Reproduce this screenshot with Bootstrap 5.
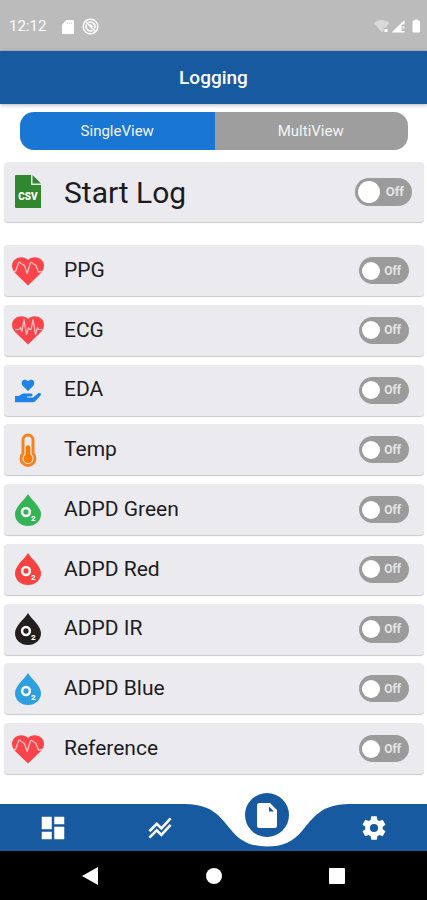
<!DOCTYPE html>
<html lang="en">
<head>
<meta charset="utf-8">
<meta name="viewport" content="width=device-width, initial-scale=1">
<title>Logging</title>
<link href="https://cdn.jsdelivr.net/npm/bootstrap@5.3.0/dist/css/bootstrap.min.css" rel="stylesheet">
<style>
  body { font-family: Roboto, "Liberation Sans", sans-serif; color: #1c1c1e; }
  .status-bar { background: #bbb; height: 51px; font-size: 15px; padding: 2px 7px 0 9px; }
  .title-bar { background: #175a9f; height: 53px; padding-top: 2px; box-shadow: 0 1px 4px rgba(0,0,0,.3); }
  .title-bar h1 { font-size: 19px; font-weight: 500; }
  .view-tabs { height: 38px; margin: 0 16px; }
  .view-tabs .btn { --bs-btn-border-radius: 14px; border: 0; flex: 1 1 0; font-size: 15px; line-height: 20px; color: #f4f4f4; background: #9e9e9e; }
  .view-tabs .btn.active { color: #f4f4f4; background: #1976d2; }
  .log-page { padding: 8px 3px 30px 4px; }
  .log-row { height: 51px; padding: 0 15px 0 8px; background: #ebeaef; border-radius: 4px; box-shadow: 0 1px 1px rgba(0,0,0,.22); font-size: 21px; }
  .log-row svg { width: 32px; height: 36px; margin-right: 20px; flex: none; }
  .log-row.start { height: 60px; padding-right: 12px; margin: 12px 0 23px; font-size: 30px; }
  .pill { width: 50px; height: 27px; padding: 0 8px 0 3px; border-radius: 14px; background: #9b9b9b; color: #e4e4e4; font-size: 12px; font-weight: 700; cursor: pointer; }
  .pill input { appearance: none; width: 18px; height: 18px; margin: 0; border-radius: 50%; background: #fff; cursor: pointer; }
  .start .pill { width: 57px; height: 28px; font-size: 13px; }
  .start .pill input { width: 22px; height: 22px; }
  .pill:has(input:checked) { background: #1976d2; flex-direction: row-reverse; }
  .tab-bar { height: 47px; background: #175a9f; }
  .tab-bar a { flex: 1 1 0; }
  .notch { position: absolute; top: 0; left: 50%; transform: translateX(-50%); }
  .fab { position: absolute; top: -11px; left: 50%; transform: translateX(-50%); width: 44px; height: 44px; background: #175a9f; }
  .system-bar { height: 49px; background: #000; padding: 0 74px; }
  .system-bar button { background: none; border: 0; padding: 0; width: 32px; height: 32px; }
</style>
<script src="https://cdn.jsdelivr.net/npm/bootstrap@5.3.0/dist/js/bootstrap.bundle.min.js"></script>
</head>
<body class="d-flex flex-column min-vh-100 bg-white">

<svg class="d-none" aria-hidden="true">
  <symbol id="heart" viewBox="0 0 32 36">
    <path fill="#f8444a" d="M16 32.500 3 20C-1 15.500-1 9.500 3 6.500 7 3 13 3.800 16 7c3-3.200 9-4 13-.5 4 3 4 9 0 13.500z"/>
  </symbol>
  <symbol id="heart-ppg" viewBox="0 0 32 36">
    <use href="#heart" width="32" height="36"/>
    <path fill="none" stroke="#ffc0c3" stroke-width="1.300" stroke-linejoin="round" d="M1 18.500 3.500 18.500 6.500 10c.4-1.200 1.500-1.200 2.200 0 .8 1.300 1.500 1.500 2.200 1.500 1 0 1.600 1 2 2.500l2.300 6.500 3-10c.5-1.500 1.600-1.500 2.300-.5.800 1.300 1.500 1.500 2.200 1.500 1 .2 1.500 1.200 2 3l1.800 4.500 3.500-.5"/>
  </symbol>
  <symbol id="drop" viewBox="0 0 32 36">
    <path fill="currentColor" d="M16 2c4 6.500 13 13 13 20.200C29 29 23.200 34 16 34S3 29 3 22.200C3 15 12 8.500 16 2z"/>
    <circle cx="14" cy="20" r="3.900" fill="none" stroke="#fff" stroke-width="2.500"/>
    <text x="19" y="29" font-size="8" font-weight="900" fill="#fff">2</text>
  </symbol>
</svg>

<header>
  <div class="status-bar d-flex align-items-center text-white">
    <span>12:12</span>
    <svg class="flex-shrink-0 ms-3 me-2" width="12" height="14" viewBox="0 0 12 14" aria-label="SD card"><path fill="#fff" d="M4.500 0H11a1 1 0 0 1 1 1v12a1 1 0 0 1-1 1H1a1 1 0 0 1-1-1V4.500z"/><path stroke="#ccc" stroke-width=".6" d="M5.500 2v2M7.500 2v2M9.500 2v2"/></svg>
    <svg width="17" height="17" viewBox="0 0 17 17" fill="none" stroke="#fff" aria-label="Sync off"><circle cx="8.500" cy="8.500" r="7.300" stroke-width="1.400"/><path stroke-width="1.500" d="m4 4 9.500 9.500M6.500 4.500a4.500 4.500 0 0 1 6 6M4.500 6.500a4.500 4.500 0 0 0 6 6M8 6.500l2.500 2.500"/></svg>
    <svg class="ms-auto" width="46" height="15" viewBox="0 0 46 15" aria-label="Wi-Fi, signal, battery">
      <path fill="#d9d9d9" d="M0 4c4.500-4 11-4 15.500 0L12 8.500H9.500V12L8 13.500z"/><path fill="#fff" d="M10.500 10h3v3h-3z"/>
      <path fill="#fff" d="M30.500 1v4.500h-3V12h3v1.500H17.500z"/><path fill="#e8e8e8" d="M28.500 7h2v3h-2z"/>
      <path fill="#fff" d="M39.500 1.500h1.200V.5h3v1h1.300a1 1 0 0 1 1 1v10a1 1 0 0 1-1 1h-5.500a1 1 0 0 1-1-1v-10a1 1 0 0 1 1-1z"/>
    </svg>
  </div>
  <div class="title-bar d-flex align-items-center justify-content-center text-white">
    <h1 class="m-0">Logging</h1>
  </div>
</header>

<main class="log-page flex-grow-1 d-flex flex-column">
  <div class="view-tabs btn-group d-flex" role="group" aria-label="View">
    <button type="button" class="btn active" aria-pressed="true">SingleView</button>
    <button type="button" class="btn" aria-pressed="false">MultiView</button>
  </div>

  <div class="log-row start d-flex align-items-center">
    <svg viewBox="0 0 32 36" aria-hidden="true"><path fill="#30872f" d="M4 1h15v10h10v23H4a1 1 0 0 1-1-1V2a1 1 0 0 1 1-1z"/><path fill="#30872f" d="M20.500 1 29 9.500h-8.500z"/><text x="16" y="26" text-anchor="middle" font-size="10" font-weight="900" fill="#fff">CSV</text></svg>
    <label for="s0" class="flex-grow-1">Start Log</label>
    <label class="pill d-flex align-items-center justify-content-between"><input type="checkbox" id="s0"><span>Off</span></label>
  </div>

  <div class="flex-grow-1 d-flex flex-column justify-content-between">
    <div class="log-row d-flex align-items-center">
      <svg aria-hidden="true"><use href="#heart-ppg"/></svg>
      <label for="s1" class="flex-grow-1">PPG</label>
      <label class="pill d-flex align-items-center justify-content-between"><input type="checkbox" id="s1"><span>Off</span></label>
    </div>
    <div class="log-row d-flex align-items-center">
      <svg viewBox="0 0 32 36" aria-hidden="true"><use href="#heart" width="32" height="36"/><path fill="none" stroke="#ffc6c9" stroke-width="1.200" stroke-linejoin="round" d="M3 17.500h4l1.500-2 1.500 4 2-12 2.500 15 2-7 1 2h1.500l2-10 2.500 15 2-7 1 2h3.500"/></svg>
      <label for="s2" class="flex-grow-1">ECG</label>
      <label class="pill d-flex align-items-center justify-content-between"><input type="checkbox" id="s2"><span>Off</span></label>
    </div>
    <div class="log-row d-flex align-items-center">
      <svg viewBox="0 0 32 36" fill="#1e82e6" aria-hidden="true"><path d="m16 19-5-5c-2-2-1.500-5 .5-6 1.700-.8 3.300-.2 4.500 1.200C17.200 7.800 18.800 7.200 20.500 8c2 1 2.500 4 .5 6z"/><path d="M3 24h4c2-2 4-2.500 6-2.500h6c2 0 2 3 0 3h-4v1h6l5-4c2-1.200 4 .2 2.500 2L23 29.500c-.8.500-1.500.7-2.500.7H3z"/></svg>
      <label for="s3" class="flex-grow-1">EDA</label>
      <label class="pill d-flex align-items-center justify-content-between"><input type="checkbox" id="s3"><span>Off</span></label>
    </div>
    <div class="log-row d-flex align-items-center">
      <svg viewBox="0 0 32 36" aria-hidden="true"><path fill="none" stroke="#f58220" stroke-width="3" d="M11 8a5 5 0 0 1 10 0v13.500a7 7 0 1 1-10 0z"/><path fill="#f57c00" d="M13.700 15.500a2.300 2.300 0 0 1 4.600 0v7.200a4.500 4.500 0 1 1-4.600 0z"/></svg>
      <label for="s4" class="flex-grow-1">Temp</label>
      <label class="pill d-flex align-items-center justify-content-between"><input type="checkbox" id="s4"><span>Off</span></label>
    </div>
    <div class="log-row d-flex align-items-center">
      <svg color="#34b456" viewBox="0 0 32 36" aria-hidden="true"><use href="#drop" width="32" height="36"/></svg>
      <label for="s5" class="flex-grow-1">ADPD Green</label>
      <label class="pill d-flex align-items-center justify-content-between"><input type="checkbox" id="s5"><span>Off</span></label>
    </div>
    <div class="log-row d-flex align-items-center">
      <svg color="#f8423f" viewBox="0 0 32 36" aria-hidden="true"><use href="#drop" width="32" height="36"/></svg>
      <label for="s6" class="flex-grow-1">ADPD Red</label>
      <label class="pill d-flex align-items-center justify-content-between"><input type="checkbox" id="s6"><span>Off</span></label>
    </div>
    <div class="log-row d-flex align-items-center">
      <svg color="#231f20" viewBox="0 0 32 36" aria-hidden="true"><use href="#drop" width="32" height="36"/></svg>
      <label for="s7" class="flex-grow-1">ADPD IR</label>
      <label class="pill d-flex align-items-center justify-content-between"><input type="checkbox" id="s7"><span>Off</span></label>
    </div>
    <div class="log-row d-flex align-items-center">
      <svg color="#2e9fdf" viewBox="0 0 32 36" aria-hidden="true"><use href="#drop" width="32" height="36"/></svg>
      <label for="s8" class="flex-grow-1">ADPD Blue</label>
      <label class="pill d-flex align-items-center justify-content-between"><input type="checkbox" id="s8"><span>Off</span></label>
    </div>
    <div class="log-row d-flex align-items-center">
      <svg aria-hidden="true"><use href="#heart-ppg"/></svg>
      <label for="s9" class="flex-grow-1">Reference</label>
      <label class="pill d-flex align-items-center justify-content-between"><input type="checkbox" id="s9"><span>Off</span></label>
    </div>
  </div>
</main>

<nav class="tab-bar d-flex" aria-label="Main">
  <a href="#" class="d-flex align-items-center justify-content-center" aria-label="Dashboard"><svg width="30" height="30" viewBox="0 0 24 24" fill="#fff"><path d="M3 13h8V3H3v10zm0 8h8v-6H3v6zm10 0h8V11h-8v10zm0-18v6h8V3h-8z"/></svg></a>
  <a href="#" class="d-flex align-items-center justify-content-center" aria-label="Plots"><svg width="26" height="24" viewBox="0 0 26 26" fill="none" stroke="#fff" stroke-width="2.800"><path d="m1.500 16.500 8-8 5 5 10-11M1.500 23.500l8-8 5 5 10-11"/></svg></a>
  <a href="#" class="position-relative" aria-label="Logging" aria-current="page">
    <svg class="notch" width="164" height="43" viewBox="0 0 164 43"><path fill="#fff" d="M0 0C28 0 36 14 47 27c9 11 20 15.500 35 15.500S108 38 117 27C128 14 136 0 164 0z"/></svg>
    <span class="fab rounded-circle d-flex align-items-center justify-content-center"><svg width="20" height="25" viewBox="0 0 20 25"><path fill="#fff" d="M2.500 0H13l7 7v15.500a2.500 2.500 0 0 1-2.500 2.500h-15A2.500 2.500 0 0 1 0 22.500v-20A2.500 2.500 0 0 1 2.500 0z"/><path fill="#175a9f" d="M12 3.500 17 8.500h-5z"/></svg></span>
  </a>
  <a href="#" class="d-flex align-items-center justify-content-center" aria-label="Settings"><svg width="28" height="28" viewBox="0 0 24 24" fill="#fff"><path d="M19.430 12.980c.04-.32.070-.64.070-.98s-.03-.66-.07-.98l2.110-1.650c.19-.15.240-.42.120-.64l-2-3.460c-.12-.22-.39-.3-.61-.22l-2.490 1c-.52-.4-1.080-.73-1.690-.98l-.38-2.650C14.460 2.180 14.250 2 14 2h-4c-.25 0-.46.180-.49.420l-.38 2.650c-.61.250-1.170.59-1.690.98l-2.490-1c-.23-.09-.49 0-.61.220l-2 3.460c-.13.220-.07.490.12.640l2.110 1.650c-.04.320-.07.650-.07.980s.03.660.070.980l-2.110 1.650c-.19.150-.24.420-.12.640l2 3.460c.12.220.39.300.61.220l2.490-1c.52.400 1.080.730 1.690.980l.38 2.650c.03.240.240.420.490.420h4c.25 0 .46-.18.490-.42l.38-2.650c.61-.25 1.170-.59 1.690-.98l2.490 1c.23.090.49 0 .61-.22l2-3.460c.12-.22.070-.49-.12-.64l-2.110-1.650zM12 15.500a3.500 3.500 0 1 1 0-7 3.500 3.500 0 0 1 0 7z"/></svg></a>
</nav>
<div class="system-bar d-flex align-items-center justify-content-between">
  <button type="button" aria-label="Back"><svg width="16" height="18" viewBox="0 0 16 18"><path fill="#fff" d="M16 0v18L0 9z"/></svg></button>
  <button type="button" aria-label="Home"><svg width="16" height="16" viewBox="0 0 16 16"><circle cx="8" cy="8" r="8" fill="#fff"/></svg></button>
  <button type="button" aria-label="Recents"><svg width="16" height="16" viewBox="0 0 16 16"><rect width="16" height="16" rx="1" fill="#fff"/></svg></button>
</div>
</body>
</html>
